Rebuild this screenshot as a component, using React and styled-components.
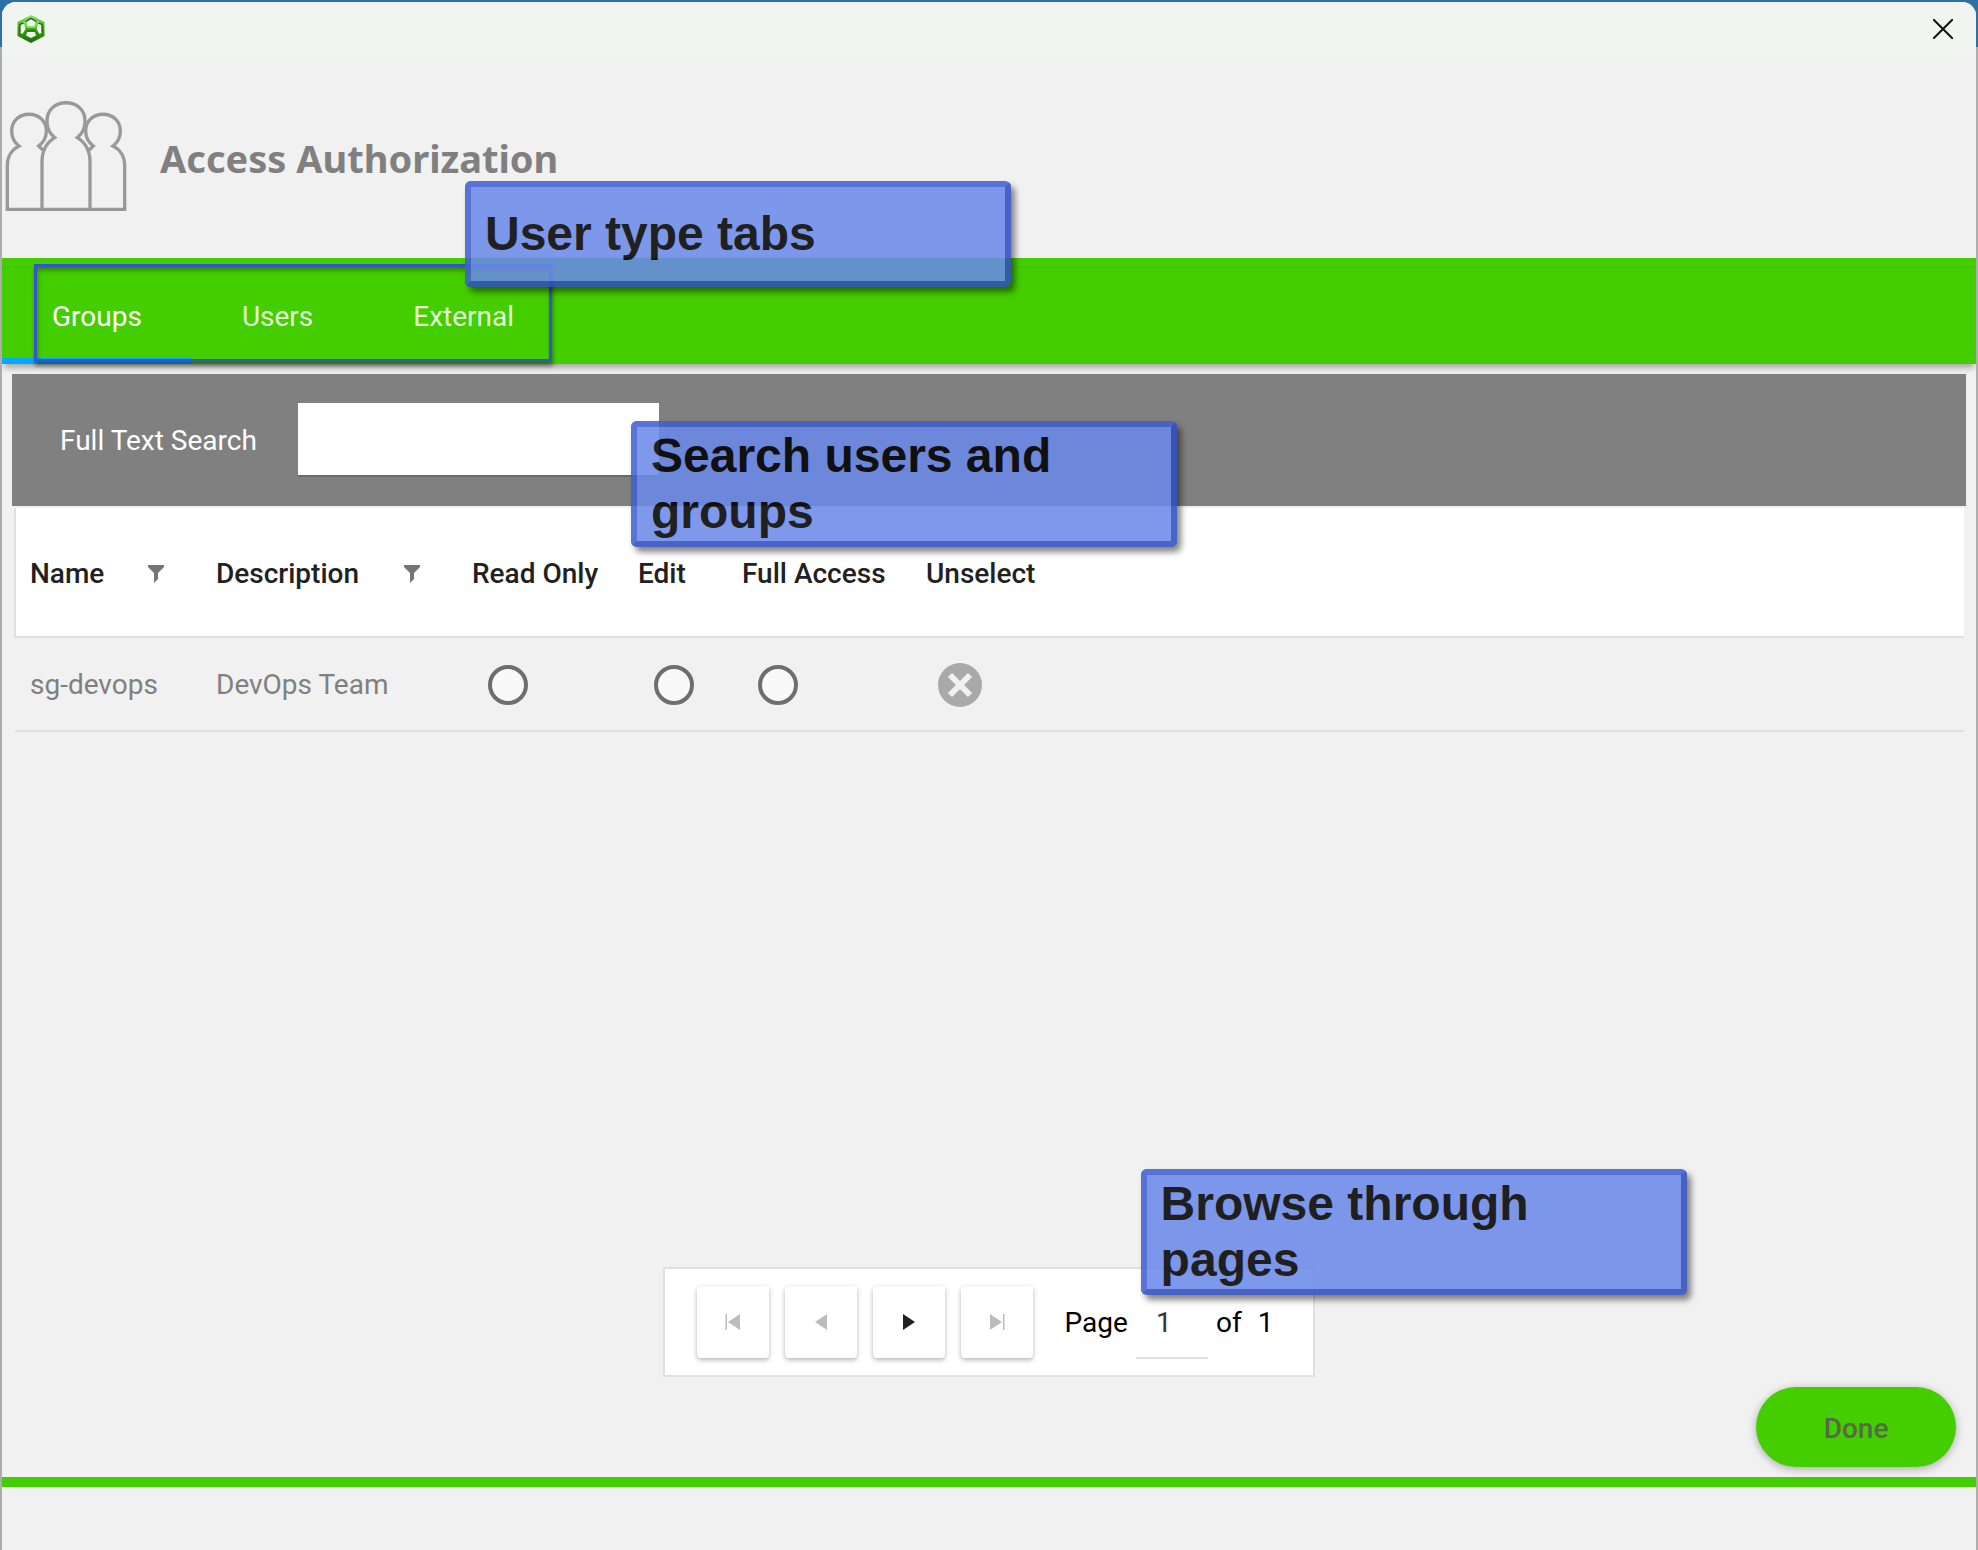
import React, { useState } from "react";
import styled, { createGlobalStyle } from "styled-components";

const green = "#44ce00";
const line = "#e0e0e0";

const GlobalStyle = createGlobalStyle`
  *, *::before, *::after { box-sizing: border-box; }
  body {
    margin: 0;
    background: #adadad;
    font-family: Roboto, "Liberation Sans", sans-serif;
    font-size: 28px;
    line-height: 32px;
    color: #212121;
  }
  button, input { font: inherit; color: inherit; }
`;

const Desktop = styled.div`
  min-height: 100vh;
  padding: 2px 2px 0;
  display: flex;
  background: linear-gradient(#2f6fa5 47px, #adadad 47px);
`;

const Dialog = styled.main`
  flex: 1;
  min-width: 0;
  display: flex;
  flex-direction: column;
  background: #f1f1f1;
  border-radius: 14px 14px 0 0;
  overflow: hidden;
`;

const TitleBar = styled.div`
  height: 56px;
  padding: 0 16px 2px 15px;
  display: flex;
  align-items: center;
  justify-content: space-between;
  background: #f2f4f1;
`;

const CloseButton = styled.button`
  width: 34px;
  height: 34px;
  padding: 0;
  border: 0;
  background: none;
  display: grid;
  place-items: center;
`;

const Header = styled.header`
  height: 200px;
  display: flex;
  align-items: center;
  gap: 20px;
`;

const Title = styled.h1`
  margin: 0;
  font: 700 38px/56px "Noto Sans", "Open Sans", sans-serif;
  color: #808080;
`;

const TabBar = styled.nav`
  position: relative;
  padding-top: 10px;
  background: ${green};
  box-shadow: 0 6px 6px -2px rgba(0, 0, 0, 0.3);
`;

const TabList = styled.div`
  position: relative;
  display: flex;
  height: 96px;
  box-shadow: 0 -1px 1px rgba(0, 0, 0, 0.06);
`;

const Tab = styled.button`
  padding: 2px 50px 0;
  border: 0;
  background: none;
  color: ${(p) => (p.$active ? "#ffffff" : "rgba(255, 255, 255, 0.87)")};
  box-shadow: ${(p) => (p.$active ? "inset 0 -6px 0 #03a9ff" : "none")};
`;

const Highlight = styled.div`
  position: absolute;
  left: 32px;
  top: -4px;
  width: 518px;
  height: 98px;
  border: 3px solid #3355cf;
  box-shadow: 1px 4px 4px rgba(0, 0, 0, 0.4), inset 1px 4px 4px rgba(0, 0, 0, 0.3);
  pointer-events: none;
`;

const Callout = styled.div`
  position: absolute;
  z-index: 2;
  left: ${(p) => p.$left}px;
  top: ${(p) => p.$top}px;
  width: 546px;
  min-height: 106px;
  padding: 1px 80px 1px 14px;
  display: flex;
  align-items: center;
  background: #6b89e9;
  border: 6px solid;
  border-color: #415fd0 #2f4dbe #2f4dbe #415fd0;
  border-radius: 6px;
  box-shadow: 4px 5px 6px rgba(0, 0, 0, 0.55);
  opacity: 0.87;
  font: 700 48px/56px "Liberation Sans", Arial, sans-serif;
  color: #000000;
`;

const Content = styled.section`
  flex: 1;
  padding: 10px;
  display: flex;
  flex-direction: column;
`;

const SearchBar = styled.div`
  position: relative;
  height: 132px;
  padding: 0 48px;
  display: flex;
  align-items: center;
  gap: 41px;
  background: #808080;
  color: #ffffff;
`;

const SearchLabel = styled.label`
  padding-top: 2px;
`;

const SearchInput = styled.input`
  width: 361px;
  height: 74px;
  padding: 0 16px;
  border: 0;
  border-bottom: 2px solid #6c6c6c;
  background: #ffffff;
  color: #212121;
  outline: none;
`;

const GridArea = styled.div`
  flex: 1;
  margin: 2px 2px 0;
`;

const Table = styled.table`
  width: 100%;
  table-layout: fixed;
  border-collapse: separate;
  border-spacing: 0;
`;

const Col = styled.col`
  width: ${(p) => (p.$width ? `${p.$width}px` : "auto")};
`;

const HeadCell = styled.th`
  height: 130px;
  padding: 4px 0 0 14px;
  background: #ffffff;
  border-bottom: 2px solid ${line};
  font-weight: 500;
  text-align: left;
  white-space: nowrap;

  &:first-child {
    border-left: 2px solid ${line};
  }
`;

const HeadContent = styled.div`
  display: flex;
  align-items: center;
  justify-content: space-between;
  padding-right: 38px;
`;

const IconButton = styled.button`
  padding: 0;
  border: 0;
  background: none;
  display: flex;
`;

const Cell = styled.td`
  height: 94px;
  padding: 2px 0 0 14px;
  border-bottom: 2px solid ${line};
  color: #808080;
  vertical-align: middle;

  &:first-child {
    border-left: 2px solid transparent;
  }
`;

const Radio = styled.input`
  appearance: none;
  display: block;
  width: 40px;
  height: 40px;
  margin: 0 0 0 16px;
  border: 4px solid #6e6e6e;
  border-radius: 50%;
  background: #f9f9f9;

  &:checked {
    box-shadow: inset 0 0 0 6px #f9f9f9;
    background: ${green};
  }
`;

const ClearButton = styled(IconButton)`
  margin-left: 12px;
`;

const Pager = styled.div`
  position: relative;
  align-self: center;
  display: flex;
  align-items: center;
  gap: 16px;
  height: 110px;
  padding: 0 40px 0 32px;
  background: #ffffff;
  border: 2px solid ${line};
`;

const PagerButton = styled.button`
  width: 72px;
  height: 72px;
  padding: 0;
  border: 0;
  border-radius: 4px;
  display: grid;
  place-items: center;
  background: #ffffff;
  color: #212121;
  box-shadow: 0 2px 5px rgba(0, 0, 0, 0.3);

  &:disabled {
    color: #bcbcbc;
  }
`;

const PageLabel = styled.label`
  display: flex;
  align-items: center;
  gap: 8px;
  margin-left: 16px;
  padding-top: 2px;
  color: #000000;
`;

const PageInput = styled.input`
  width: 72px;
  height: 72px;
  padding: 0 20px;
  border: 0;
  border-bottom: 2px solid ${line};
  background: none;
  color: #333333;
  outline: none;
`;

const PageTotal = styled.span`
  margin-left: 8px;
`;

const Footer = styled.footer`
  padding: 0 20px 10px;
  display: flex;
  justify-content: flex-end;
  border-bottom: 10px solid ${green};
  margin-bottom: 63px;
`;

const DoneButton = styled.button`
  width: 200px;
  height: 80px;
  padding: 4px 0 0;
  border: 0;
  border-radius: 40px;
  background: ${green};
  color: #576a48;
  font-weight: 500;
  box-shadow: 0 2px 8px rgba(0, 0, 0, 0.3);
`;

function Logo() {
  return (
    <svg width="28" height="28" viewBox="0 0 28 28" aria-hidden="true">
      <defs>
        <linearGradient id="logo" x1="0" y1="0" x2="0" y2="1">
          <stop offset="0" stopColor="#8be56a" />
          <stop offset="0.5" stopColor="#39a512" />
          <stop offset="1" stopColor="#1c6b05" />
        </linearGradient>
      </defs>
      <path
        fill="url(#logo)"
        fillRule="evenodd"
        d="M14 0 27.500 7V21L14 28 .5 21V7ZM14 3.500 9 6.500 10.500 11H17.500L19 6.500ZM7 8 3 9.500V17.500L5.500 19 8.500 14ZM21 8 25 9.500V17.500L22.500 19 19.500 14ZM10.500 16.500 9 20.500 14 23 19 20.500 17.500 16.500Z"
      />
      <path d="M9 6.500 14 3.500 19 6.500M3 17.500V9.500L7 8M21 8 25 9.500V17.500" fill="none" stroke="#175803" strokeWidth="1.200" />
      <path d="M6.500 6.500 10 12H18L21.500 6.500" fill="none" stroke="#7fdc58" strokeWidth="1.800" />
      <path d="M10 16H18" stroke="#1c6b05" strokeWidth="1.500" />
    </svg>
  );
}

function PeopleIcon() {
  return (
    <svg width="138" height="130" viewBox="6 8 414 390" fill="none" stroke="#999999" strokeWidth="10" aria-hidden="true">
      <path d="M22 357V225C22 200 35 178 57 167C45 158 35 147 35 122C35 55 139 55 139 122C139 147 128 158 116 167L128 179" />
      <path d="M374 357V225C374 200 361 178 339 167C351 158 361 147 361 122C361 55 257 55 257 122C257 147 268 158 280 167L268 179" />
      <path d="M126 357V215C126 180 143 155 164 142C149 130 141 115 141 92C141 19 255 19 255 92C255 115 247 130 232 142C253 155 270 180 270 215V357" />
      <path d="M17 357H379" />
    </svg>
  );
}

function FunnelIcon() {
  return (
    <svg width="16" height="18" viewBox="0 0 16 18" fill="#757575" aria-hidden="true">
      <path d="M0 0H16V2L10 8V14L6 18V8L0 2Z" />
    </svg>
  );
}

function ArrowIcon({ back, bar }) {
  return (
    <svg width="16" height="16" viewBox="0 0 16 16" fill="currentColor" aria-hidden="true">
      <g transform={back ? "translate(16 0) scale(-1 1)" : undefined}>
        <path d={bar ? "M1 0 13 8 1 16ZM14 0H15.500V16H14Z" : "M2 0 14 8 2 16Z"} />
      </g>
    </svg>
  );
}

const tabs = ["Groups", "Users", "External"];

const columns = [
  { title: "Name", width: 188, filter: true },
  { title: "Description", width: 256, filter: true },
  { title: "Read Only", width: 166 },
  { title: "Edit", width: 104 },
  { title: "Full Access", width: 184 },
  { title: "Unselect" },
];

const rows = [{ name: "sg-devops", description: "DevOps Team" }];

const levels = ["Read Only", "Edit", "Full Access"];

export default function App() {
  const [tab, setTab] = useState("Groups");
  const [access, setAccess] = useState({});

  return (
    <>
      <GlobalStyle />
      <Desktop>
        <Dialog>
          <TitleBar>
            <Logo />
            <CloseButton aria-label="Close">
              <svg width="20" height="20" viewBox="0 0 20 20" stroke="#111111" strokeWidth="2" aria-hidden="true">
                <path d="M0 0 20 20M20 0 0 20" />
              </svg>
            </CloseButton>
          </TitleBar>

          <Header>
            <PeopleIcon />
            <Title>Access Authorization</Title>
          </Header>

          <TabBar>
            <TabList role="tablist">
              {tabs.map((name) => (
                <Tab key={name} role="tab" aria-selected={tab === name} $active={tab === name} onClick={() => setTab(name)}>
                  {name}
                </Tab>
              ))}
              <Highlight />
            </TabList>
            <Callout $left={463} $top={-77}>User type tabs</Callout>
          </TabBar>

          <Content>
            <SearchBar>
              <SearchLabel htmlFor="search">Full Text Search</SearchLabel>
              <SearchInput id="search" type="text" />
              <Callout $left={619} $top={47}>Search users and groups</Callout>
            </SearchBar>

            <GridArea>
              <Table>
                <colgroup>
                  {columns.map((c) => (
                    <Col key={c.title} $width={c.width} />
                  ))}
                </colgroup>
                <thead>
                  <tr>
                    {columns.map((c) => (
                      <HeadCell key={c.title} scope="col">
                        {c.filter ? (
                          <HeadContent>
                            {c.title}
                            <IconButton aria-label={`Filter ${c.title}`}>
                              <FunnelIcon />
                            </IconButton>
                          </HeadContent>
                        ) : (
                          c.title
                        )}
                      </HeadCell>
                    ))}
                  </tr>
                </thead>
                <tbody>
                  {rows.map((row) => (
                    <tr key={row.name}>
                      <Cell>{row.name}</Cell>
                      <Cell>{row.description}</Cell>
                      {levels.map((level) => (
                        <Cell key={level}>
                          <Radio
                            type="radio"
                            name={row.name}
                            aria-label={level}
                            checked={access[row.name] === level}
                            onChange={() => setAccess({ ...access, [row.name]: level })}
                          />
                        </Cell>
                      ))}
                      <Cell>
                        <ClearButton aria-label="Unselect" onClick={() => setAccess({ ...access, [row.name]: null })}>
                          <svg width="44" height="44" viewBox="0 0 44 44" aria-hidden="true">
                            <circle cx="22" cy="22" r="22" fill="#a9a9a9" />
                            <path d="M12 12 32 32M32 12 12 32" stroke="#f1f1f1" strokeWidth="6" />
                          </svg>
                        </ClearButton>
                      </Cell>
                    </tr>
                  ))}
                </tbody>
              </Table>
            </GridArea>

            <Pager>
              <PagerButton disabled aria-label="First page">
                <ArrowIcon back bar />
              </PagerButton>
              <PagerButton disabled aria-label="Previous page">
                <ArrowIcon back />
              </PagerButton>
              <PagerButton aria-label="Next page">
                <ArrowIcon />
              </PagerButton>
              <PagerButton disabled aria-label="Last page">
                <ArrowIcon bar />
              </PagerButton>
              <PageLabel>
                Page
                <PageInput type="text" defaultValue="1" />
                of
                <PageTotal>1</PageTotal>
              </PageLabel>
              <Callout $left={476} $top={-100}>Browse through pages</Callout>
            </Pager>
          </Content>

          <Footer>
            <DoneButton>Done</DoneButton>
          </Footer>
        </Dialog>
      </Desktop>
    </>
  );
}
